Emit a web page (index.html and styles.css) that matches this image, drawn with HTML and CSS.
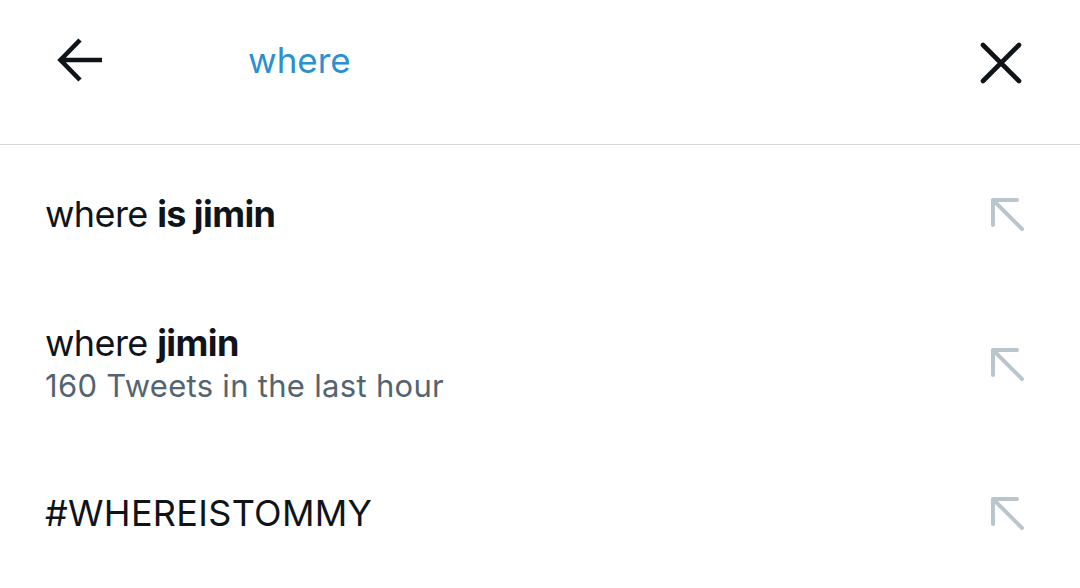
FILE: index.html
```html
<!DOCTYPE html>
<html>
<head>
<meta charset="utf-8">
<link rel="stylesheet" href="styles.css">
</head>
<body>
<div class="app">
  <header class="header">
    <svg class="back" width="46" height="46" viewBox="0 0 46 46"><path d="M45 22H3.5M23 2L3.5 22 23 42" fill="none" stroke="#0f1419" stroke-width="4.6" stroke-linecap="butt" stroke-linejoin="miter"/></svg>
    <div class="query">where</div>
    <svg class="close" width="42" height="42" viewBox="0 0 42 42"><path d="M3 3l36 36M39 3L3 39" fill="none" stroke="#0f1419" stroke-width="4.6" stroke-linecap="round"/></svg>
  </header>
  <ul class="list">
    <li class="row row-1">
      <div class="text"><div class="main">where <b>is jimin</b></div></div>
      <svg class="go" width="34" height="34" viewBox="0 0 34 34"><path d="M3 3h24M3 3v25M3 3l29 29" fill="none" stroke="#b9c6ce" stroke-width="4" stroke-linecap="round" stroke-linejoin="round"/></svg>
    </li>
    <li class="row row-2">
      <div class="text"><div class="main">where <b>jimin</b></div><div class="sub">160 Tweets in the last hour</div></div>
      <svg class="go" width="34" height="34" viewBox="0 0 34 34"><path d="M3 3h24M3 3v25M3 3l29 29" fill="none" stroke="#b9c6ce" stroke-width="4" stroke-linecap="round" stroke-linejoin="round"/></svg>
    </li>
    <li class="row row-3">
      <div class="text"><div class="main caps">#WHEREISTOMMY</div></div>
      <svg class="go" width="34" height="34" viewBox="0 0 34 34"><path d="M3 3h24M3 3v25M3 3l29 29" fill="none" stroke="#b9c6ce" stroke-width="4" stroke-linecap="round" stroke-linejoin="round"/></svg>
    </li>
  </ul>
</div>
</body>
</html>
```
FILE: styles.css
```css
html, body {
  margin: 0;
  padding: 0;
  background: #ffffff;
}
body {
  font-family: Inter, "Noto Sans", "Liberation Sans", sans-serif;
  color: #0f1419;
}
.app {
  width: 1080px;
  height: 588px;
  overflow: hidden;
}
.header {
  height: 145px;
  border-bottom: 1.5px solid #d9d9d9;
  display: flex;
  align-items: center;
  padding: 0 58px 20px 57px;
  box-sizing: border-box;
}
.back {
  flex: none;
  margin-top: -2px;
}
.query {
  margin-left: 145px;
  flex: 1;
  font-size: 35px;
  color: #2b8fd0;
  margin-top: -4px;
}
.close {
  flex: none;
  margin-top: 2px;
}
.list {
  list-style: none;
  margin: 0;
  padding: 0;
}
.row {
  display: flex;
  align-items: center;
  padding: 0 56px 0 45px;
}
.row-1 { height: 137px; }
.row-2 { height: 163px; }
.row-3 { height: 136px; }
.text {
  flex: 1;
}
.main {
  font-size: 36px;
  line-height: 44px;
  letter-spacing: -0.6px;
}
.main.caps {
  letter-spacing: 0.3px;
}
.main b {
  font-weight: 700;
}
.sub {
  font-size: 31px;
  line-height: 42px;
  letter-spacing: 0.3px;
  color: #536471;
}
.go {
  flex: none;
}
```
